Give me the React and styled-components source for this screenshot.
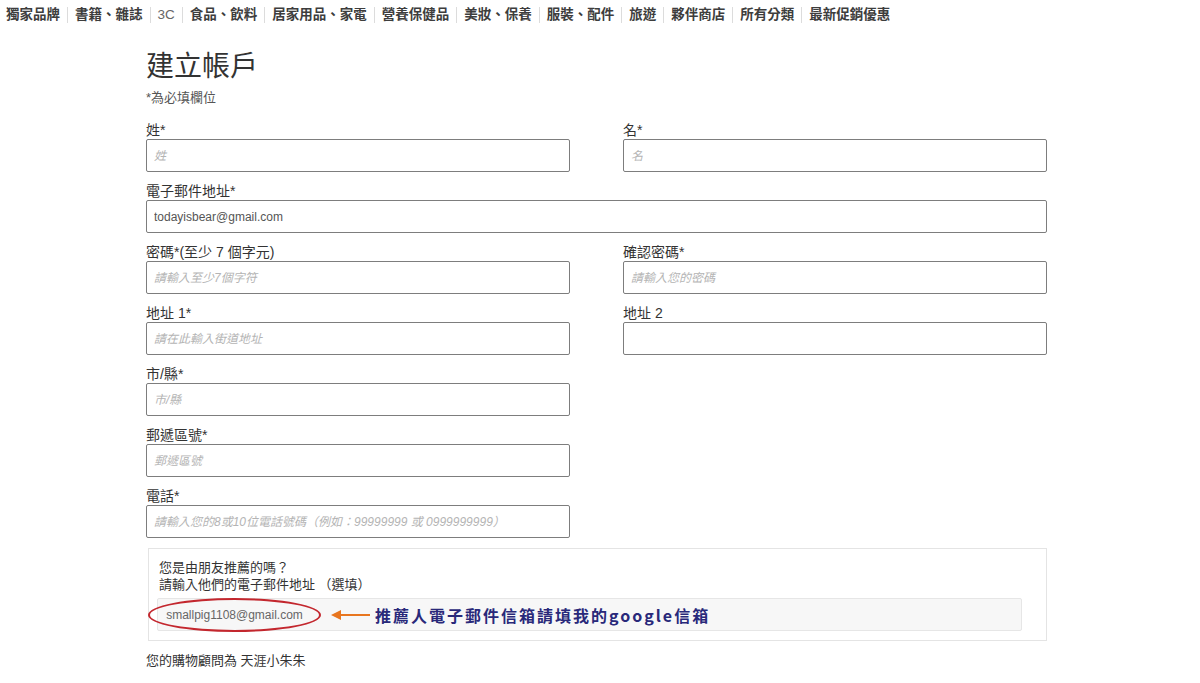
import React from 'react';
import styled, { createGlobalStyle } from 'styled-components';

const GlobalStyle = createGlobalStyle`
  body {
    margin: 0;
    background: #fff;
    font-family: "Liberation Sans", "Noto Sans CJK TC", sans-serif;
    color: #333;
  }
`;

const Nav = styled.nav`
  display: flex;
  align-items: center;
  height: 30px;
  padding-left: 6px;
`;

const NavItem = styled.a`
  font-size: 13.5px;
  font-weight: ${p => (p.$plain ? 'normal' : 'bold')};
  color: ${p => (p.$plain ? '#666' : '#3d3d3d')};
  text-decoration: none;
  padding: 0 7px;
  line-height: 16px;
  border-left: 1px solid #dcdcdc;
  &:first-child {
    padding-left: 0;
    border-left: none;
  }
`;

const Page = styled.main`
  width: 901px;
  margin-left: 146px;
  padding-top: 19px;
`;

const Title = styled.h1`
  margin: 0;
  font-size: 28px;
  font-weight: normal;
  line-height: 36px;
  color: #333;
`;

const Note = styled.p`
  margin: 4px 0 14px;
  font-size: 13px;
  line-height: 18px;
  color: #555;
`;

const Grid = styled.div`
  display: grid;
  grid-template-columns: 424px 424px;
  column-gap: 53px;
`;

const Field = styled.div`
  grid-column: ${p => (p.$wide ? '1 / span 2' : 'auto')};
  display: flex;
  flex-direction: column;
  margin-bottom: 10px;
`;

const Label = styled.label`
  font-size: 14px;
  line-height: 18px;
  color: #333;
`;

const Input = styled.input`
  box-sizing: border-box;
  height: 33px;
  width: 100%;
  border: 1px solid #7d7d7d;
  border-radius: 2px;
  padding: 0 7px;
  font-family: "Liberation Sans", "Noto Sans CJK TC", sans-serif;
  font-size: 12px;
  color: #555;
  background: #fff;
  &::placeholder {
    color: #b4b4b4;
    font-style: italic;
  }
`;

const Referral = styled.section`
  box-sizing: border-box;
  width: 899px;
  margin-left: 2px;
  border: 1px solid #e4e4e4;
  padding: 10px 24px 9px 8px;
`;

const RefText = styled.p`
  margin: 0 0 5px 2px;
  font-size: 13px;
  line-height: 17px;
  color: #333;
`;

const RefBox = styled.div`
  display: flex;
  align-items: center;
  height: 33px;
  box-sizing: border-box;
  border: 1px solid #e6e6e6;
  background: #f7f7f7;
  border-radius: 2px;
`;

const Circled = styled.span`
  box-sizing: border-box;
  display: flex;
  align-items: center;
  justify-content: center;
  width: 173px;
  height: 34px;
  margin-left: -10px;
  border: 2px solid #c3272e;
  border-radius: 50%;
  font-size: 12px;
  color: #666;
`;

const Arrow = styled.svg`
  margin-left: 10px;
  flex: none;
`;

const Callout = styled.span`
  margin-left: 4px;
  font-size: 16px;
  font-weight: bold;
  letter-spacing: 2px;
  color: #29297a;
  font-family: "Noto Sans CJK TC", sans-serif;
`;

const Advisor = styled.p`
  margin: 11px 0 0;
  font-size: 13px;
  line-height: 17px;
  color: #333;
`;

const navItems = ['獨家品牌', '書籍、雜誌', '3C', '食品、飲料', '居家用品、家電', '營養保健品', '美妝、保養', '服裝、配件', '旅遊', '夥伴商店', '所有分類', '最新促銷優惠'];

const App = () => {
  return (
    <>
      <GlobalStyle />
      <Nav>
        {navItems.map(item => (
          <NavItem key={item} href="#" $plain={item === '3C'}>{item}</NavItem>
        ))}
      </Nav>
      <Page>
        <Title>建立帳戶</Title>
        <Note>*為必填欄位</Note>
        <Grid>
          <Field>
            <Label>姓*</Label>
            <Input placeholder="姓" />
          </Field>
          <Field>
            <Label>名*</Label>
            <Input placeholder="名" />
          </Field>
          <Field $wide>
            <Label>電子郵件地址*</Label>
            <Input defaultValue="todayisbear@gmail.com" />
          </Field>
          <Field>
            <Label>密碼*(至少 7 個字元)</Label>
            <Input placeholder="請輸入至少7個字符" />
          </Field>
          <Field>
            <Label>確認密碼*</Label>
            <Input placeholder="請輸入您的密碼" />
          </Field>
          <Field>
            <Label>地址 1*</Label>
            <Input placeholder="請在此輸入街道地址" />
          </Field>
          <Field>
            <Label>地址 2</Label>
            <Input />
          </Field>
          <Field>
            <Label>市/縣*</Label>
            <Input placeholder="市/縣" />
          </Field>
          <div />
          <Field>
            <Label>郵遞區號*</Label>
            <Input placeholder="郵遞區號" />
          </Field>
          <div />
          <Field>
            <Label>電話*</Label>
            <Input placeholder="請輸入您的8或10位電話號碼（例如：99999999 或 0999999999）" />
          </Field>
        </Grid>
        <Referral>
          <RefText>
            您是由朋友推薦的嗎？<br />
            請輸入他們的電子郵件地址 （選填）
          </RefText>
          <RefBox>
            <Circled>smallpig1108@gmail.com</Circled>
            <Arrow width="40" height="12" viewBox="0 0 40 12">
              <line x1="8" y1="6" x2="39" y2="6" stroke="#e8761f" strokeWidth="2" />
              <path d="M0 6 L10 1 L10 11 Z" fill="#e8761f" />
            </Arrow>
            <Callout>推薦人電子郵件信箱請填我的google信箱</Callout>
          </RefBox>
        </Referral>
        <Advisor>您的購物顧問為 天涯小朱朱</Advisor>
      </Page>
    </>
  );
};

export default App;
